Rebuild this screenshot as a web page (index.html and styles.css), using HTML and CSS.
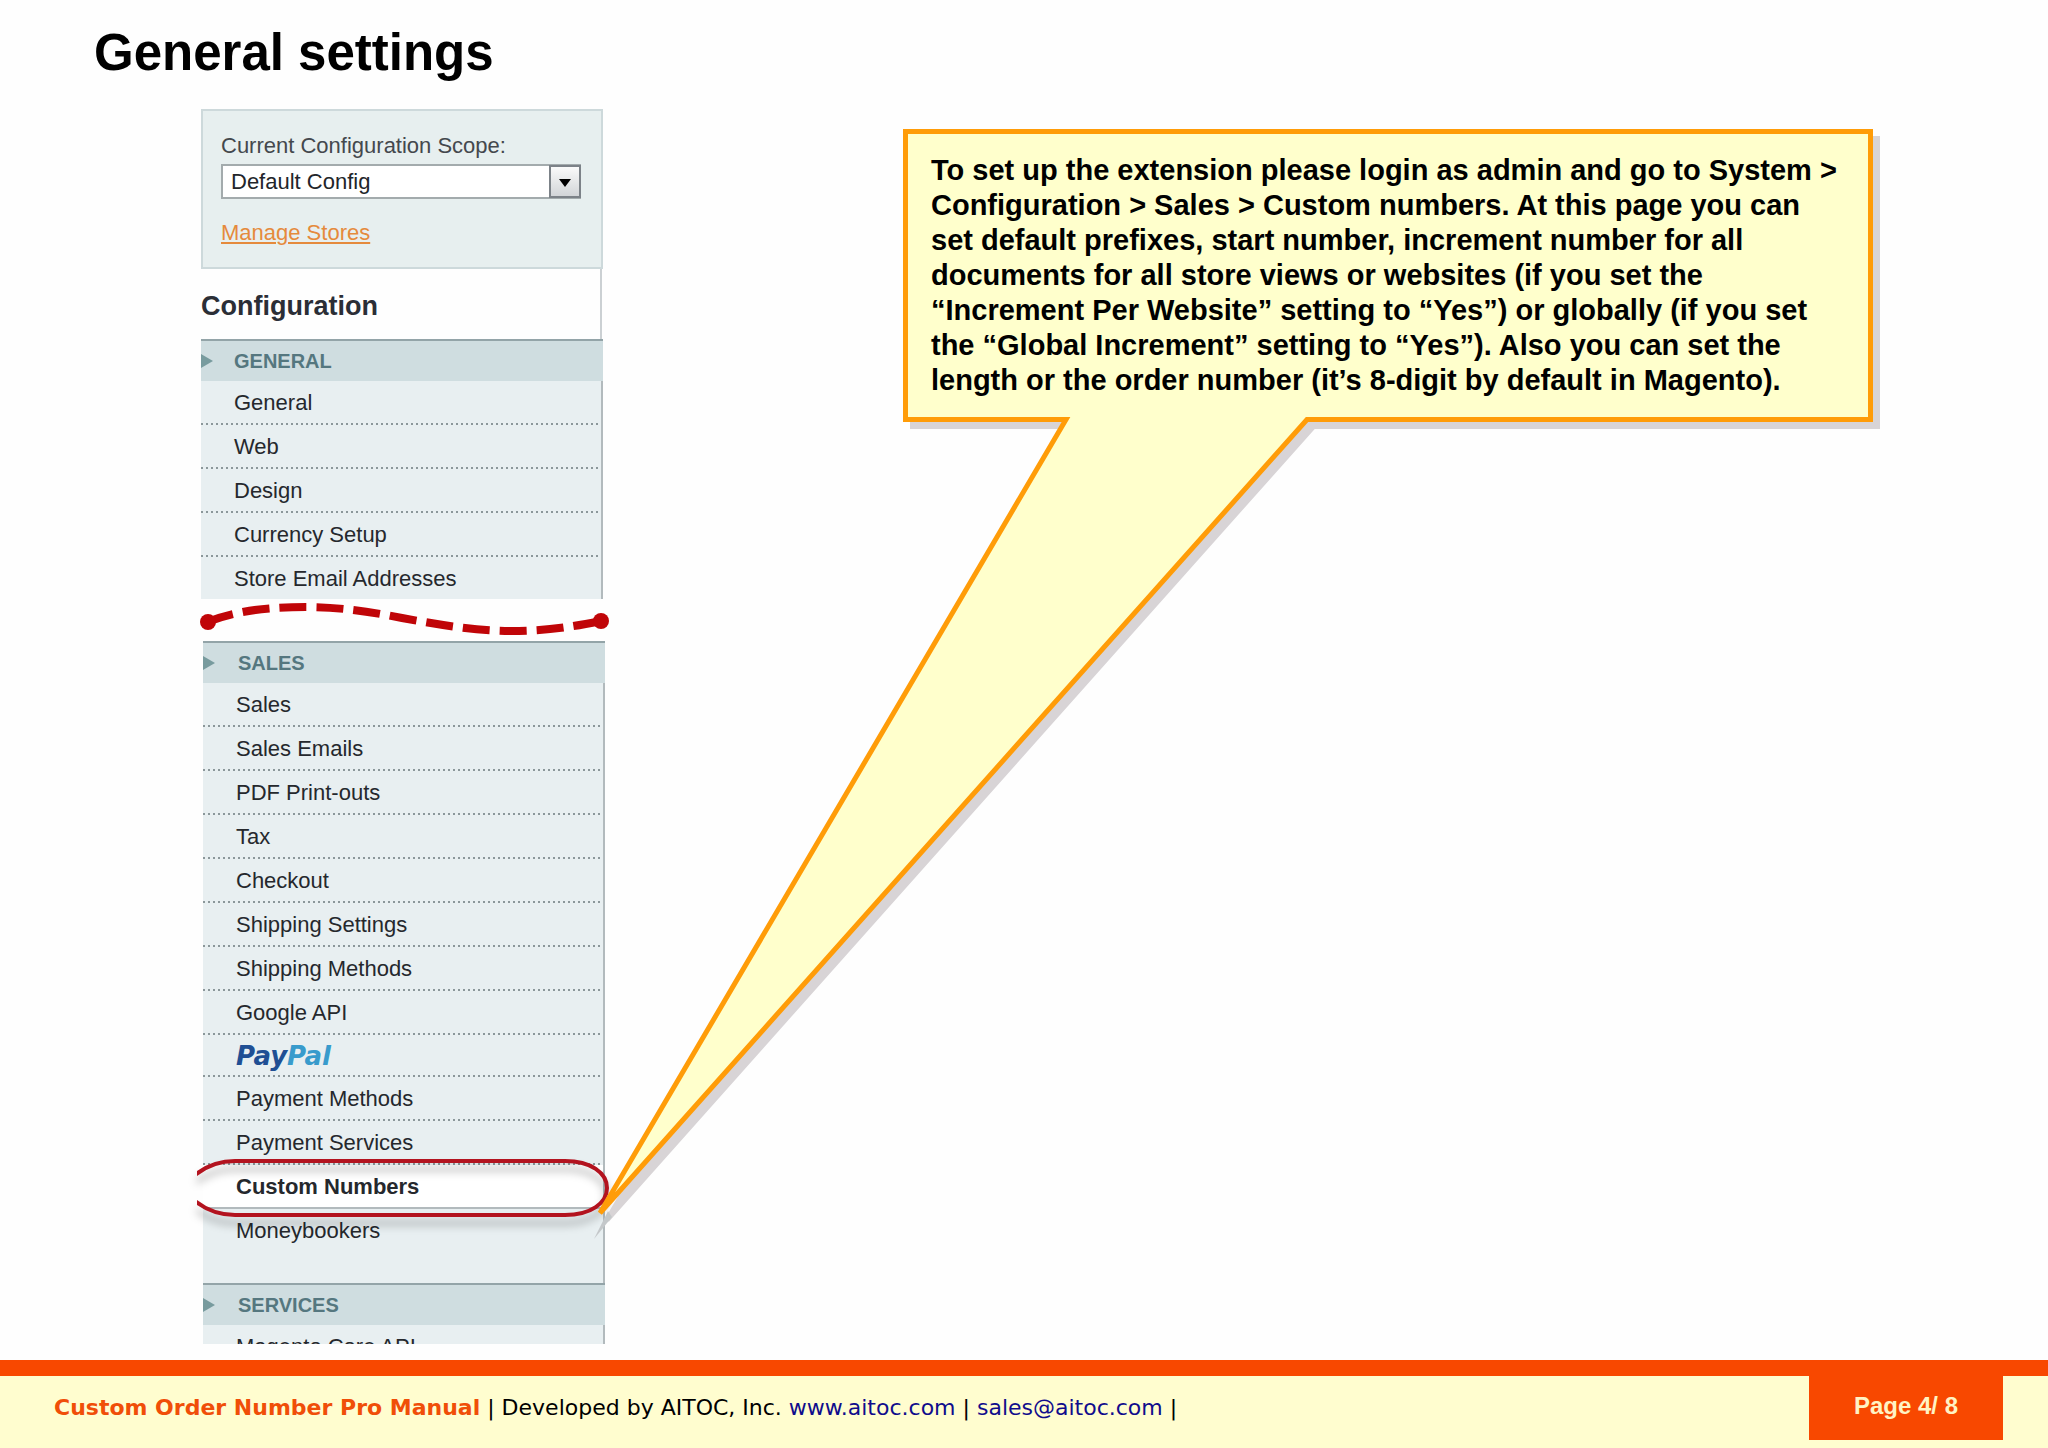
FILE: index.html
```
<!DOCTYPE html>
<html lang="en">
<head>
  <meta charset="utf-8">
  <title>Custom Order Number Pro Manual</title>
  <link rel="stylesheet" href="styles.css">
</head>
<body>
  <main>
    <h1>General settings</h1>

    <div class="content">
      <aside class="sidebar">
        <form class="scope">
          <label for="scope-select">Current Configuration Scope:</label>
          <div class="select-wrap">
            <select id="scope-select">
              <option>Default Config</option>
            </select>
            <span class="select-arrow"></span>
          </div>
          <a href="#">Manage Stores</a>
        </form>

        <h2>Configuration</h2>

        <section class="group">
          <h3>GENERAL</h3>
          <ul>
            <li><a href="#">General</a></li>
            <li><a href="#">Web</a></li>
            <li><a href="#">Design</a></li>
            <li><a href="#">Currency Setup</a></li>
            <li class="cut"><a href="#">Store Email Addresses</a></li>
          </ul>
        </section>

        <!-- dashed line for the skipped part of the menu -->
        <svg class="wave" viewBox="0 0 412 42">
          <path d="M6 23 C40 10 75 8 105 8 C140 8 170 13 201 19 C240 26 275 32 310 32 C345 32 370 28 400 22" fill="none" stroke="#c00508" stroke-width="8" stroke-dasharray="27 10"/>
          <circle cx="7" cy="23" r="8" fill="#c00508"/>
          <circle cx="400" cy="22" r="8" fill="#c00508"/>
        </svg>

        <div class="lower">
          <section class="group">
            <h3>SALES</h3>
            <ul>
              <li><a href="#">Sales</a></li>
              <li><a href="#">Sales Emails</a></li>
              <li><a href="#">PDF Print-outs</a></li>
              <li><a href="#">Tax</a></li>
              <li><a href="#">Checkout</a></li>
              <li><a href="#">Shipping Settings</a></li>
              <li><a href="#">Shipping Methods</a></li>
              <li><a href="#">Google API</a></li>
              <li class="paypal"><a href="#"><span>Pay</span><span class="pal">Pal</span></a></li>
              <li><a href="#">Payment Methods</a></li>
              <li><a href="#">Payment Services</a></li>
              <li class="active">
                <a href="#">Custom Numbers</a>
                <svg class="ring" viewBox="0 0 420 80">
                  <path d="M-2 22 C8 14 22 8 38 8 H368 C394 8 410 20 410 35 C410 50 394 62 368 62 H38 C22 62 8 56 -2 48" fill="none" stroke="#b3131f" stroke-width="4"/>
                </svg>
              </li>
              <li class="last"><a href="#">Moneybookers</a></li>
            </ul>
          </section>

          <section class="group services">
            <h3>SERVICES</h3>
            <ul>
              <li><a href="#">Magento Core API</a></li>
            </ul>
          </section>
        </div>
      </aside>

      <div class="callout">
        <p>To set up the extension please login as admin and go to System &gt; Configuration &gt; Sales &gt; Custom numbers. At this page you can set default prefixes, start number, increment number for all documents for all store views or websites (if you set the “Increment Per Website” setting to “Yes”) or globally (if you set the “Global Increment” setting to “Yes”). Also you can set the length or the order number (it’s 8-digit by default in Magento).</p>
        <svg class="tail" viewBox="0 0 740 840">
          <path d="M481 9 L15 803 L722 9" fill="#d8d4d6" stroke="#d8d4d6" stroke-width="5"/>
          <path d="M20 800 L2 822 L16 794 Z" fill="#c4c8ca"/>
          <path d="M474 0 H717 L8 796 Z" fill="#ffffcc"/>
          <path d="M464 2.5 H474 L8 796 L715 2.5 H730" fill="none" stroke="#ff9c08" stroke-width="5"/>
        </svg>
      </div>
    </div>
  </main>

  <footer>
    <p><b>Custom Order Number Pro Manual</b> | Developed by AITOC, Inc. <a href="#">www.aitoc.com</a> | <a href="#">sales@aitoc.com</a> |</p>
    <div class="page-number">Page 4/ 8</div>
  </footer>
</body>
</html>
```

FILE: styles.css
```
* {
  box-sizing: border-box;
}

body {
  margin: 0;
  min-height: 100vh;
  display: flex;
  flex-direction: column;
  background-color: #fefefe;
  color: #000;
  font-family: "Liberation Sans", Arial, sans-serif;
}

h1, h2, h3, p, ul {
  margin: 0;
  padding: 0;
}

main {
  flex: 1;
  padding-top: 23px;
}

h1 {
  padding-left: 94px;
  font-size: 51px;
  line-height: 60px;
}

.content {
  display: grid;
  grid-template-columns: 402px minmax(0, 970px);
  column-gap: 300px;
  align-items: start;
  padding: 26px 24px 16px 201px;
}

/* Sidebar */
.sidebar {
  font-size: 22px;
}

.scope {
  height: 160px;
  padding: 22px 20px 0 18px;
  background-color: #e7efef;
  border: 2px solid #cdd9db;
  color: #44484d;
}

.scope label {
  display: block;
  line-height: 26px;
}

.scope a {
  color: #e58a3c;
  line-height: 26px;
}

.select-wrap {
  position: relative;
  margin: 5px 0 21px;
}

.select-wrap select {
  display: block;
  width: 100%;
  height: 35px;
  padding: 0 36px 0 8px;
  appearance: none;
  background-color: #fff;
  border: 2px solid #a3abad;
  border-radius: 0;
  color: #22252a;
  font: inherit;
}

.select-arrow {
  position: absolute;
  top: 1px;
  right: 0;
  width: 32px;
  height: 33px;
  background: linear-gradient(#fafafa, #d2d5d8);
  border: 2px solid #7c8288;
  pointer-events: none;
}

.select-arrow::after {
  content: '';
  position: absolute;
  top: 12px;
  left: 8px;
  border: 6px solid transparent;
  border-top: 8px solid #000;
  border-bottom: 0;
}

h2 {
  height: 70px;
  margin-right: 1px;
  border-right: 2px solid #cbd0d3;
  color: #2b2e36;
  font-size: 27px;
  line-height: 75px;
}

.group {
  background-color: #e8eff1;
}

.group h3 {
  display: flex;
  align-items: center;
  height: 42px;
  background-color: #cfdde0;
  border-top: 2px solid #93a4a8;
  color: #55777f;
  font-size: 20px;
}

.group h3::before {
  content: '';
  margin-right: 21px;
  border: 7px solid transparent;
  border-left: 12px solid #789b9e;
  border-right: 0;
}

.group ul {
  list-style: none;
  border-right: 2px solid #b2babd;
}

.group li {
  height: 44px;
  padding-left: 33px;
  background: linear-gradient(to right, #8b979a 2px, transparent 2px) left bottom / 5px 2px repeat-x;
  line-height: 44px;
}

.group li a {
  color: #25282d;
  text-decoration: none;
}

.group .cut {
  height: 42px;
  background: none;
}

.wave {
  display: block;
  width: 412px;
  height: 42px;
  overflow: visible;
}

/* the lower half of the menu sits slightly to the right */
.lower {
  margin: 0 -2px 0 2px;
}

.lower h3::before {
  margin-right: 23px;
}

.group .paypal {
  height: 42px;
  font-family: Verdana, "DejaVu Sans", sans-serif;
  font-size: 26px;
  font-style: italic;
  font-weight: bold;
  line-height: 42px;
}

.group .paypal a {
  color: #204f94;
}

.paypal .pal {
  color: #389bcc;
}

.group .active {
  position: relative;
  background: #fff;
  border-bottom: 2px solid #b2babd;
  font-weight: bold;
}

.ring {
  position: absolute;
  top: -12px;
  left: -6px;
  width: 420px;
  height: 80px;
  filter: drop-shadow(0 8px 4px rgba(0, 0, 0, 0.3));
}

.group .last {
  height: 74px;
  background: none;
}

.services {
  height: 61px;
  overflow: hidden;
}

/* Callout */
.callout {
  position: relative;
  margin-top: 20px;
  padding: 19px 19px 19px 23px;
  background-color: #ffffcc;
  border: 5px solid #ff9c08;
  box-shadow: 7px 7px 0 #d8d4d6;
  font-size: 29px;
  font-weight: bold;
  line-height: 35px;
}

.tail {
  position: absolute;
  top: 100%;
  left: -316px;
  width: 740px;
  height: 840px;
  pointer-events: none;
}

/* Footer */
footer {
  display: flex;
  justify-content: space-between;
  align-items: flex-start;
  height: 89px;
  padding: 0 45px 0 54px;
  background-color: #fffdcf;
  border-top: 16px solid #f84800;
  font-family: Verdana, "DejaVu Sans", sans-serif;
  font-size: 22px;
  line-height: 64px;
}

footer b {
  color: #f04e08;
}

footer a {
  color: #100c8c;
  text-decoration: none;
}

.page-number {
  width: 194px;
  height: 64px;
  background-color: #f84800;
  color: #fff3c4;
  font-family: "Liberation Sans", Arial, sans-serif;
  font-size: 24px;
  font-weight: bold;
  line-height: 60px;
  text-align: center;
}
```
